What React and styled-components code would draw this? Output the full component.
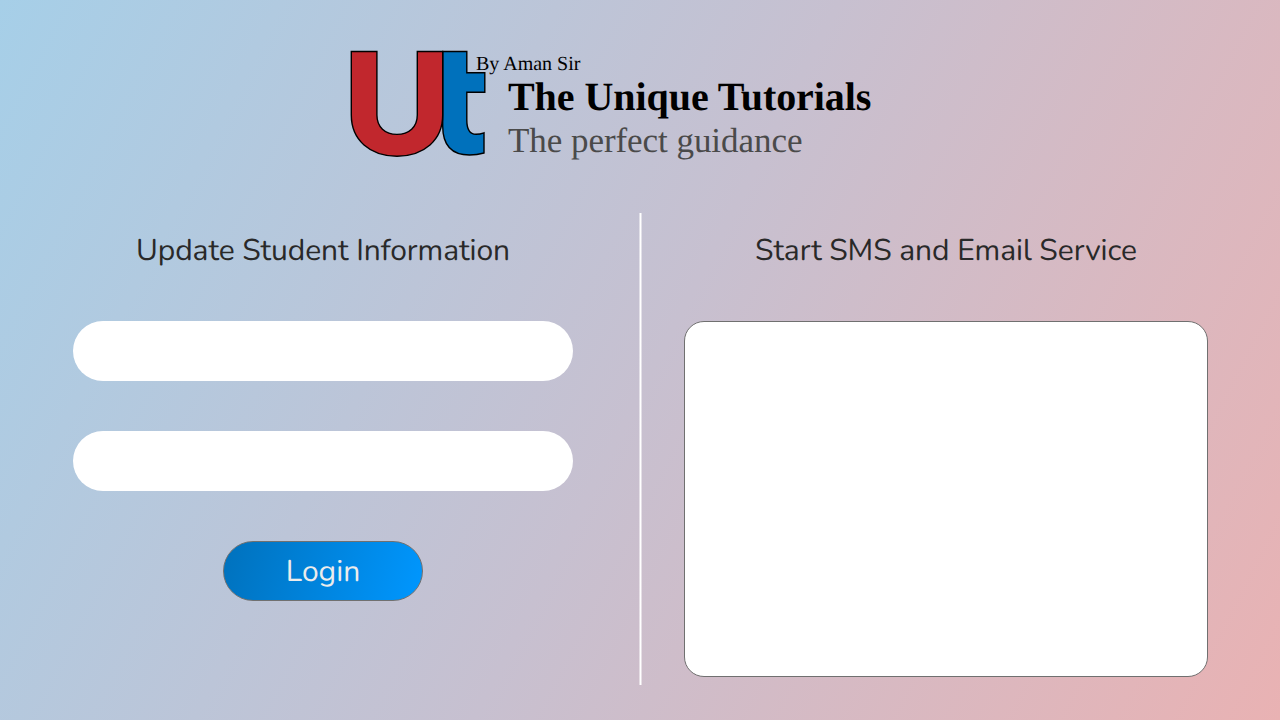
import React from "react";
import styled, { createGlobalStyle } from "styled-components";

const GlobalStyle = createGlobalStyle`
  * { box-sizing: border-box; }
  body { margin: 0; overflow: hidden; }
`;

const Page = styled.div`
  width: 1280px;
  height: 720px;
  overflow: hidden;
  display: flex;
  flex-direction: column;
  color: #292929;
  font-family: Nunito, Lato, sans-serif;
  background: linear-gradient(117deg, #a6cfe8 0%, #c7c0d0 51%, #e9b2b3 100%);
`;

const Header = styled.header`
  display: flex;
  height: 213px;
  padding: 50px 0 0 350px;
`;

const Logo = styled.svg`
  display: block;
  flex: none;
  width: 136px;
  height: 108px;
`;

const Brand = styled.div`
  display: flex;
  flex-direction: column;
  margin-left: -10px;
  padding-top: 3px;
  font-family: "Liberation Serif", "Times New Roman", serif;
  white-space: nowrap;
  text-rendering: geometricPrecision;
`;

const Byline = styled.span`
  font-size: 20px;
  line-height: 22px;
  color: #000;
`;

const Title = styled.h1`
  margin: 0 0 0 32px;
  font-size: 40px;
  line-height: 44px;
  letter-spacing: -0.06px;
  color: #000;
`;

const Tagline = styled.span`
  margin-left: 32px;
  font-size: 35px;
  line-height: 44px;
  letter-spacing: -0.05px;
  color: #4a4a4a;
`;

const Main = styled.main`
  display: grid;
  grid-template-columns: 639px 3px 638px;
  height: 472px;
`;

const Panel = styled.section`
  display: flex;
  flex-direction: column;
  align-items: center;
  padding: 18px ${(p) => p.$right} 0 ${(p) => p.$left};
`;

const Divider = styled.div`
  background: linear-gradient(90deg, rgba(255, 255, 255, 0.5) 1px, #fff 1px 2px, rgba(255, 255, 255, 0.5) 2px);
`;

const Heading = styled.h2`
  margin: 0 0 50px;
  height: 40px;
  line-height: 40px;
  font-size: 30px;
  font-weight: 400;
  letter-spacing: -0.07px;
  text-rendering: geometricPrecision;
  white-space: nowrap;
`;

const Field = styled.input`
  width: 500px;
  height: 60px;
  margin-bottom: 50px;
  padding: 0 30px;
  border: 0;
  border-radius: 30px;
  background: #fff;
  font: inherit;
  font-size: 24px;
  outline: none;
`;

const LoginButton = styled.button`
  width: 200px;
  height: 60px;
  padding: 0;
  border: 1px solid #707070;
  border-radius: 30px;
  background: linear-gradient(107deg, #0071bc 0%, #0097ff 100%) border-box;
  color: #ececec;
  font: inherit;
  font-size: 30px;
  font-weight: 400;
  text-rendering: geometricPrecision;
`;

const ServiceBox = styled.div`
  width: 524px;
  height: 356px;
  border: 1px solid #707070;
  border-radius: 20px;
  background: #fff;
`;

export default function App() {
  return (
    <Page>
      <GlobalStyle />
      <Header>
        <Logo viewBox="350 50 136 108" stroke="#000" strokeWidth="1.4">
          <path fill="#0071bc" d="M442.7 51.5H466.8V72.7H484.8V92.3H466.8V120C466.8 130 470 134.3 476 134.3Q480 134.3 484 132.8V153Q477 155 469.5 155C452 155 442.7 145 442.7 126Z" />
          <path fill="#c1272d" d="M351.3 51.5H376.9V115C376.9 127 385 134.4 397 134.4S417.3 127 417.3 115V51.5H442.7V115C442.7 140 424 156.2 397 156.2S351.3 140 351.3 115Z" />
        </Logo>
        <Brand>
          <Byline>By Aman Sir</Byline>
          <Title>The Unique Tutorials</Title>
          <Tagline>The perfect guidance</Tagline>
        </Brand>
      </Header>
      <Main>
        <Panel $left="7px" $right="0">
          <Heading>Update Student Information</Heading>
          <Field aria-label="Username" />
          <Field aria-label="Password" type="password" />
          <LoginButton>Login</LoginButton>
        </Panel>
        <Divider />
        <Panel $left="0" $right="30px">
          <Heading>Start SMS and Email Service</Heading>
          <ServiceBox />
        </Panel>
      </Main>
    </Page>
  );
}
